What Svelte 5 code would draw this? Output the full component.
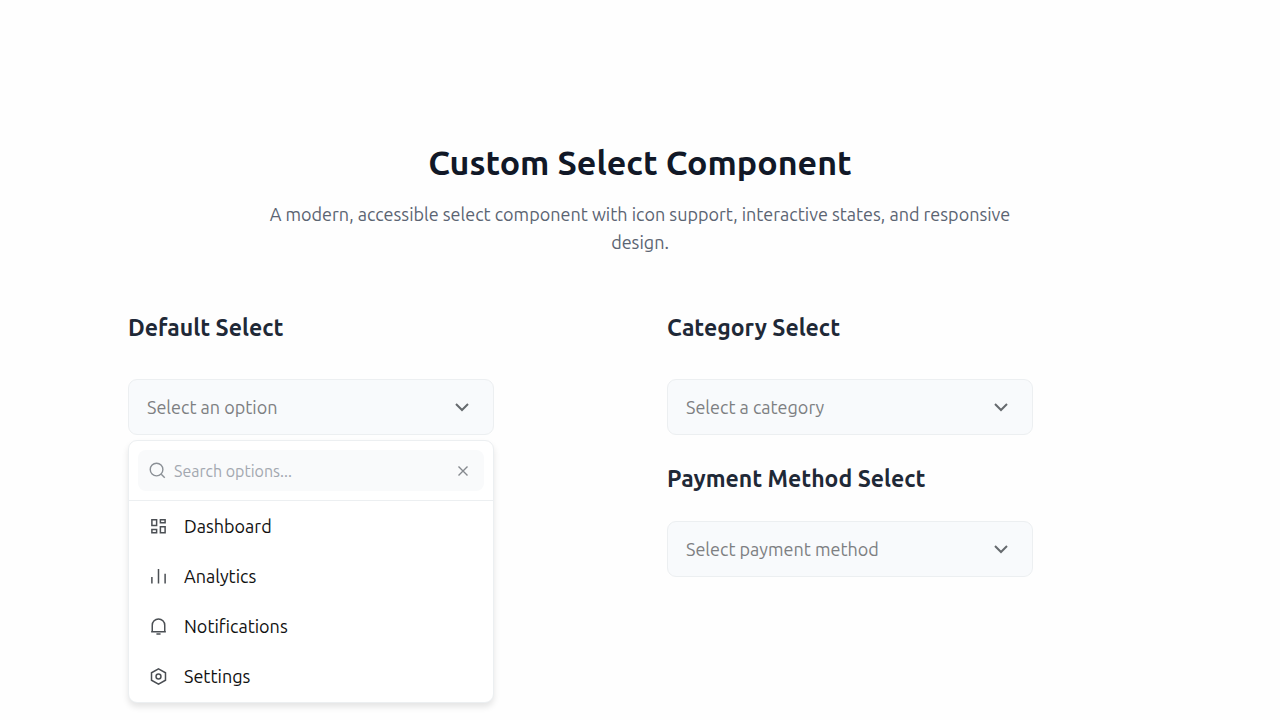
<!--
  Custom select demo page
  A searchable dropdown with icons, next to two plain selects
-->
<script>
  let open = $state(true);
  let query = $state('');
  let selected = $state('');

  const options = [
    { value: 'dashboard', label: 'Dashboard' },
    { value: 'analytics', label: 'Analytics' },
    { value: 'notifications', label: 'Notifications' },
    { value: 'settings', label: 'Settings' }
  ];

  const categories = ['Electronics', 'Clothing', 'Books'];
  const payments = ['Credit card', 'PayPal', 'Bank transfer'];

  let filtered = $derived(
    options.filter((o) => o.label.toLowerCase().includes(query.toLowerCase()))
  );

  function choose(option) {
    selected = option.label;
    query = '';
    open = false;
  }
</script>

{#snippet chevron()}
  <svg class="chevron" viewBox="0 0 20 20" aria-hidden="true">
    <path d="M4 7l6 6 6-6" />
  </svg>
{/snippet}

{#snippet optionIcon(name)}
  <svg class="option-icon" viewBox="0 0 18 18" aria-hidden="true">
    {#if name === 'dashboard'}
      <path d="M2 1.800h5v6.200H2zM11 1.800h5v3.200h-5zM2 12.200h5v3.400H2zM11 9.200h5v6.400h-5z" />
    {:else if name === 'analytics'}
      <path d="M2 9.500v7M9 1v15.500M16 6v10.500" />
    {:else if name === 'notifications'}
      <path d="M1.200 14.600h15.600M2.400 14.600V7.600a6.600 6.600 0 0 1 13.200 0v7M6.800 17h4.400" />
    {:else}
      <path d="M9 .900 16.400 5v8L9 17.100 1.600 13V5z" />
      <circle cx="9" cy="9" r="2.600" />
    {/if}
  </svg>
{/snippet}

<main class="page">
  <header class="intro">
    <h1>Custom Select Component</h1>
    <p>
      A modern, accessible select component with icon support, interactive states, and responsive
      design.
    </p>
  </header>

  <div class="columns">
    <section class="column">
      <h2 id="default-label">Default Select</h2>
      <div class="dropdown">
        <button
          class="control"
          class:placeholder={!selected}
          type="button"
          aria-haspopup="listbox"
          aria-expanded={open}
          aria-labelledby="default-label"
          onclick={() => (open = !open)}
        >
          <span>{selected || 'Select an option'}</span>
          {@render chevron()}
        </button>

        {#if open}
          <div class="menu">
            <div class="search-row">
              <div class="search">
                <svg class="search-icon" viewBox="0 0 18 18" aria-hidden="true">
                  <circle cx="8" cy="8" r="6.700" />
                  <path d="m13 13 3.700 3.700" />
                </svg>
                <input
                  type="text"
                  placeholder="Search options..."
                  aria-label="Search options"
                  bind:value={query}
                />
                <button class="clear" type="button" aria-label="Clear search" onclick={() => (query = '')}>
                  <svg viewBox="0 0 12 12" aria-hidden="true">
                    <path d="m1.500 1.500 9 9M10.500 1.500l-9 9" />
                  </svg>
                </button>
              </div>
            </div>
            <div class="options" role="listbox" aria-labelledby="default-label">
              {#each filtered as option (option.value)}
                <button
                  class="option"
                  type="button"
                  role="option"
                  aria-selected={selected === option.label}
                  onclick={() => choose(option)}
                >
                  {@render optionIcon(option.value)}
                  <span>{option.label}</span>
                </button>
              {/each}
            </div>
          </div>
        {/if}
      </div>
    </section>

    <section class="column">
      <h2><label for="category">Category Select</label></h2>
      <div class="native">
        <select id="category" class="control placeholder">
          <option value="">Select a category</option>
          {#each categories as category}
            <option>{category}</option>
          {/each}
        </select>
        {@render chevron()}
      </div>

      <h2 class="compact"><label for="payment">Payment Method Select</label></h2>
      <div class="native">
        <select id="payment" class="control placeholder">
          <option value="">Select payment method</option>
          {#each payments as payment}
            <option>{payment}</option>
          {/each}
        </select>
        {@render chevron()}
      </div>
    </section>
  </div>
</main>

<style>
  :global(body) {
    background: #fefefe;
  }

  .page {
    box-sizing: border-box;
    width: 80%;
    min-height: 100vh;
    margin: 0 auto;
    padding-top: 142px;
    font-family: Ubuntu, 'Noto Sans', sans-serif;
    font-size: 18px;
    line-height: 28px;
    color: #111;
  }

  .intro {
    max-width: 768px;
    margin: 0 auto 56px;
    text-align: center;
  }

  h1 {
    margin: 0 0 18px;
    font-size: 34px;
    font-weight: 600;
    line-height: 40px;
    color: #111827;
  }

  .intro p {
    margin: 0;
    color: #5b6472;
  }

  .columns {
    display: grid;
    grid-template-columns: 1fr 1fr;
    align-items: start;
    gap: 54px;
  }

  h2 {
    margin: 0 0 35px;
    font-size: 23px;
    font-weight: 600;
    line-height: 32px;
    color: #1f2937;
  }

  h2.compact {
    margin: 28px 0 26px;
  }

  .dropdown {
    max-width: 366px;
  }

  .native {
    display: grid;
    align-items: center;
    max-width: 366px;
  }

  .native > :global(*) {
    grid-area: 1 / 1;
  }

  .native .chevron {
    justify-self: end;
    margin-right: 22px;
    pointer-events: none;
  }

  .control {
    box-sizing: border-box;
    display: flex;
    align-items: center;
    justify-content: space-between;
    width: 100%;
    height: 56px;
    padding: 0 21px 0 18px;
    border: 1px solid #eceff1;
    border-radius: 9px;
    background: #f8fafc;
    appearance: none;
    font: inherit;
    color: #111;
    text-align: left;
    cursor: pointer;
  }

  .control.placeholder {
    color: #7d7f82;
  }

  .chevron {
    width: 20px;
    height: 20px;
    fill: none;
    stroke: #666a6e;
    stroke-width: 2;
  }

  .menu {
    overflow: hidden;
    margin-top: 5px;
    border: 1px solid #eceff1;
    border-radius: 9px;
    background: #fff;
    box-shadow: 0 4px 6px rgba(0, 0, 0, 0.1);
  }

  .search-row {
    padding: 9px;
    border-bottom: 1px solid #eceff1;
  }

  .search {
    display: flex;
    align-items: center;
    gap: 8px;
    height: 41px;
    padding: 0 15px 0 11px;
    border-radius: 8px;
    background: #f9fafb;
  }

  .search-icon {
    flex-shrink: 0;
    width: 17px;
    height: 17px;
    fill: none;
    stroke: #8b9096;
    stroke-width: 1.5;
  }

  .search input {
    flex: 1;
    min-width: 0;
    padding: 0;
    border: 0;
    outline: none;
    background: none;
    font: inherit;
    font-size: 16px;
    color: #111;
  }

  .search input::placeholder {
    color: #a3a8b0;
    opacity: 1;
  }

  .clear {
    display: flex;
    padding: 0;
    border: 0;
    background: none;
    cursor: pointer;
  }

  .clear svg {
    width: 12px;
    height: 12px;
    fill: none;
    stroke: #85898e;
    stroke-width: 1.4;
  }

  .options {
    display: flex;
    flex-direction: column;
    padding-bottom: 1px;
  }

  .option {
    display: flex;
    align-items: center;
    gap: 17px;
    padding: 11px 21px;
    border: 0;
    background: none;
    font: inherit;
    color: #111;
    text-align: left;
    cursor: pointer;
  }

  .option:hover {
    background: #f8fafc;
  }

  .option-icon {
    flex-shrink: 0;
    width: 17px;
    height: 17px;
    fill: none;
    stroke: #4b4f54;
    stroke-width: 1.6;
  }
</style>
